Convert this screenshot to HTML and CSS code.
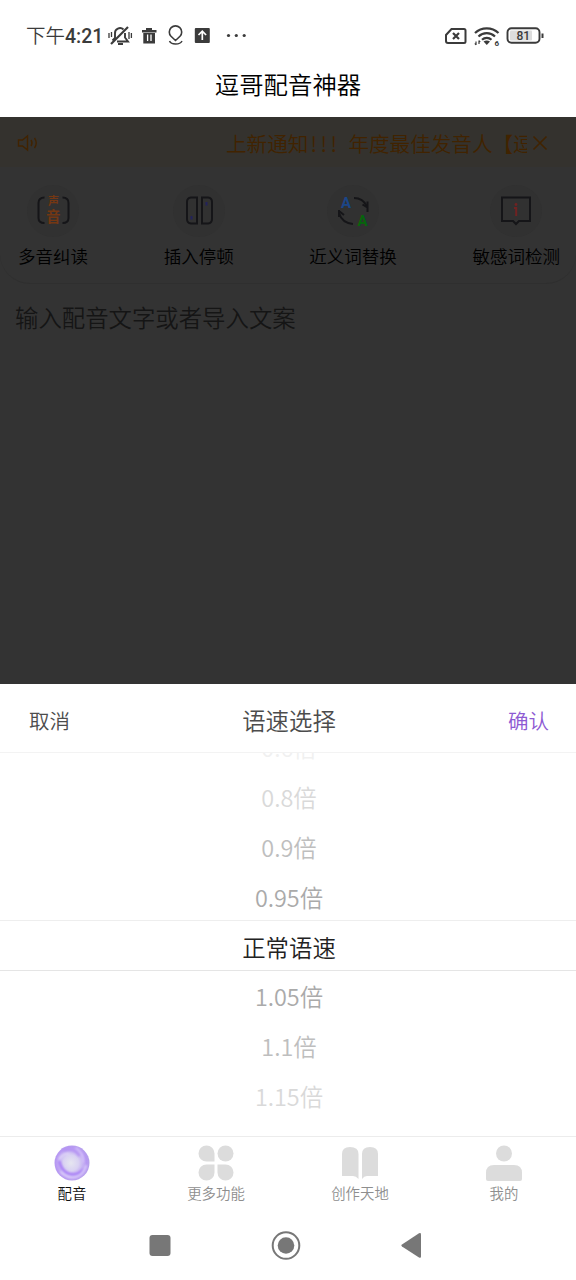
FILE: index.html
```html
<!DOCTYPE html>
<html lang="zh-CN">
<head>
<meta charset="utf-8">
<title>逗哥配音神器</title>
<link rel="stylesheet" href="styles.css">
</head>
<body>
<div class="phone">
  <header class="status">
    <span class="clock">下午<b>4:21</b></span>
    <svg class="status-left" width="146" height="26" viewBox="0 0 146 26" fill="none" stroke="#3b3b3b">
      <g stroke-width="1.900">
        <path d="M4.500 17.500L7 15V10.500A5 5 0 0 1 15.500 6.500M17 10V14.500L20 18.500H9"/>
        <path d="M3 21L20 4" stroke-width="2.200"/>
        <path d="M10 21H15" stroke-width="2"/>
        <path d="M1 10V15M3.500 9V14M21 9V16M23.400 10V15" stroke-width="1.300"/>
      </g>
      <path d="M34 7H48.500V9.500H34ZM38 5H44V7H38ZM35.300 10H47V20.500H35.300Z" fill="#3b3b3b" stroke="none"/>
      <path d="M39.600 11.500V18M43 11.500V18" stroke="#fff" stroke-width="1.300"/>
      <path d="M67.500 17.500L63 13.300A6.200 6.200 0 1 1 72 13.300Z" stroke-width="1.600"/>
      <path d="M61.500 18C63 22 72 22 74 18" stroke-width="1.500"/>
      <rect x="86.800" y="5" width="15" height="15" rx="1" fill="#3b3b3b" stroke="none"/>
      <path d="M94.300 17V8.500M90.500 12L94.300 8.200L98.100 12" stroke="#fff" stroke-width="1.700"/>
      <g fill="#3b3b3b" stroke="none"><circle cx="120.500" cy="12.500" r="1.600"/><circle cx="128.300" cy="12.500" r="1.600"/><circle cx="136.200" cy="12.500" r="1.600"/></g>
    </svg>
    <svg class="status-right" width="102" height="26" viewBox="0 0 102 26" fill="none" stroke="#3b3b3b">
      <path d="M7.500 6H20Q21.500 6 21.500 7.500V18.500Q21.500 20 20 20H4Q2 20 2 18V12Z" stroke-width="2"/>
      <path d="M9 10L15 16M15 10L9 16" stroke-width="2.200"/>
      <g stroke-width="2.200"><path d="M31 10A17 17 0 0 1 54.500 10"/><path d="M34.500 13.500A12 12 0 0 1 51 13.500"/><path d="M38 16.800A7 7 0 0 1 47.500 16.800"/></g>
      <path d="M39.500 18.500Q42.800 16.500 46 18.500L42.800 22Z" fill="#3b3b3b" stroke="none"/>
      <path d="M32 18.500V22M35 17.500V21M30.800 20.500L32 22M35 17.500L36.200 19" stroke-width="1.200"/>
      <text x="50.500" y="22.500" class="wifi-gen">6</text>
      <rect x="63.500" y="5.200" width="32" height="14.600" rx="4" stroke-width="1.900"/>
      <rect x="66" y="7.500" width="22" height="10" rx="1" fill="#ddd" stroke="none"/>
      <path d="M98.500 10.500V15" stroke-width="2"/>
      <text x="72.500" y="17" class="battery-level">81</text>
    </svg>
  </header>
  <h1 class="app-title">逗哥配音神器</h1>

  <main class="editor">
    <div class="notice">
      <svg width="24" height="20" viewBox="0 0 24 20" fill="none" stroke="#412300" stroke-width="1.400"><path d="M2.500 7H6.500L11.500 3V17L6.500 13H2.500ZM15 7Q17 10 15 13M18.500 5Q22 10 18.500 15"/></svg>
      <div class="notice-text">上新通知<span class="bang">!!!</span>年度最佳发音人【逗</div>
      <svg width="18" height="18" viewBox="0 0 18 18" stroke="#412300" stroke-width="1.600"><path d="M2.500 2.500L15.500 15.500M15.500 2.500L2.500 15.500"/></svg>
    </div>
    <section class="tools">
      <div class="tool">
        <svg width="52" height="52" viewBox="0 0 52 52" fill="none" stroke="#151518" stroke-width="2"><circle class="halo" cx="26" cy="26" r="26"/><path d="M17.500 12.500Q11.500 12.500 11.500 18V33Q11.500 38 17.500 38M35.500 12.500Q41.500 12.500 41.500 18V33Q41.500 38 35.500 38"/><text class="sound-top" x="21" y="20">声</text><text class="sound-bottom" x="19" y="37">音</text></svg>
        <span>多音纠读</span>
      </div>
      <div class="tool">
        <svg width="52" height="52" viewBox="0 0 52 52" fill="none" stroke="#151518" stroke-width="2"><circle class="halo" cx="26" cy="26" r="26"/><path d="M24 12.500H18Q14 13 14 17V34Q14 38 18 38.500H24ZM29 12.500H35Q39 13 39 17V34Q39 38 35 38.500H29Z"/><path d="M18.500 31V34.500M33.500 17V20.500" stroke="#22225c"/></svg>
        <span>插入停顿</span>
      </div>
      <div class="tool">
        <svg width="52" height="52" viewBox="0 0 52 52" fill="none" stroke="#151518" stroke-width="2"><circle class="halo" cx="26" cy="26" r="26"/><path d="M27 13Q36 13 40 21.500M12 28Q15 38 26 39"/><path d="M35.500 19.500L40.500 22.500V16.500M12 26L17 30M40.500 21V27M12 32V25"/><text class="letter blue" x="14" y="22.500">A</text><text class="letter green" x="30.500" y="40.500">A</text></svg>
        <span>近义词替换</span>
      </div>
      <div class="tool">
        <svg width="52" height="52" viewBox="0 0 52 52" fill="none" stroke="#151518" stroke-width="2"><circle class="halo" cx="26" cy="26" r="26"/><path d="M12 12.500H40V36H29L26 39L23 36H12Z"/><path d="M24 23H26.200V31" stroke="#702222"/><circle cx="26" cy="19.500" r="1.400" fill="#702222" stroke="none"/></svg>
        <span>敏感词检测</span>
      </div>
    </section>
    <p class="placeholder">输入配音文字或者导入文案</p>
  </main>

  <section class="sheet">
    <div class="sheet-head"><span class="cancel">取消</span><span class="sheet-title">语速选择</span><span class="confirm">确认</span></div>
    <div class="wheel">
      <div class="row far3">0.6倍</div>
      <div class="row far2">0.8倍</div>
      <div class="row far1">0.9倍</div>
      <div class="row near">0.95倍</div>
      <div class="row selected">正常语速</div>
      <div class="row near">1.05倍</div>
      <div class="row far1">1.1倍</div>
      <div class="row far2">1.15倍</div>
    </div>
  </section>

  <nav class="tabs">
    <div class="tab active">
      <svg width="36" height="36" viewBox="0 0 36 36">
        <defs>
          <radialGradient id="orb" cx=".47" cy=".5" r=".55"><stop offset="0" stop-color="#e6e6f0"/><stop offset=".4" stop-color="#d9d2f2"/><stop offset=".8" stop-color="#b798f3"/><stop offset="1" stop-color="#b3a0e8"/></radialGradient>
          <filter id="soft"><feGaussianBlur stdDeviation="1"/></filter>
        </defs>
        <circle cx="18" cy="18" r="17.500" fill="url(#orb)"/>
        <g fill="none" stroke-linecap="round" filter="url(#soft)">
          <path d="M5 15Q7 26 15 29Q24 31 30 24" stroke="#a77bf7" stroke-width="2.500"/>
          <path d="M10 5Q20 2 25 10" stroke="#b594f3" stroke-width="3"/>
          <path d="M5 15Q8 8 15 9" stroke="#e3daf8" stroke-width="1.600"/>
          <path d="M7 27Q14 34 22 32Q29 30 32 21" stroke="#dfd3fa" stroke-width="2"/>
          <path d="M22 3Q30 8 29 17" stroke="#d7c5fb" stroke-width="1.600"/>
        </g>
      </svg>
      <span>配音</span>
    </div>
    <div class="tab">
      <svg width="36" height="36" viewBox="0 0 36 36" fill="#dcdcdc"><path d="M8.500 .5A8 8 0 0 1 16.500 8.500V16.500H8.500A8 8 0 0 1 8.500 .5ZM8.500 19.500H16.500V27.500A8 8 0 1 1 8.500 19.500ZM19.500 19.500H27.500A8 8 0 1 1 19.500 27.500Z"/><circle cx="27.500" cy="8.500" r="8"/></svg>
      <span>更多功能</span>
    </div>
    <div class="tab">
      <svg width="36" height="36" viewBox="0 0 36 36" fill="#dcdcdc"><path d="M0 9Q0 2 8 2Q16.500 2 16.500 9V34Q14 31 11 31H0ZM20 9Q20 2 28 2Q36 2 36 9V31H25Q22 31 20 34Z"/></svg>
      <span>创作天地</span>
    </div>
    <div class="tab">
      <svg width="36" height="36" viewBox="0 0 36 36" fill="#dcdcdc"><circle cx="18" cy="8.500" r="8"/><path d="M0 28Q0 20 8 20H28Q36 20 36 28V34Q36 36 34 36H2Q0 36 0 34Z"/></svg>
      <span>我的</span>
    </div>
  </nav>
  <footer class="sysnav">
    <svg width="576" height="70" viewBox="0 0 576 70" fill="#777"><rect x="149.500" y="25" width="21" height="21" rx="3"/><circle cx="286" cy="35.500" r="13.300" fill="none" stroke="#777" stroke-width="2"/><circle cx="286" cy="35.500" r="8.300"/><path d="M402 34.500L419 23.300Q421 22.500 421 24.500V46.500Q421 48.500 419 47.500L402 36.500Q400.500 35.500 402 34.500Z"/></svg>
  </footer>
</div>
</body>
</html>
```

FILE: styles.css
```css
* { box-sizing: border-box; margin: 0; padding: 0; }
body {
  width: 576px;
  height: 1280px;
  overflow: hidden;
  background: #fff;
  font-family: "Noto Sans CJK SC", sans-serif;
  font-weight: 350;
}
svg { display: block; flex: none; }
.phone { display: flex; flex-direction: column; height: 1280px; }

.status { display: flex; align-items: center; height: 50px; padding: 22px 0 0 26px; color: #3b3b3b; }
.clock { width: 82px; font-size: 19.500px; line-height: 26px; white-space: nowrap; }
.clock b { font-family: Roboto, sans-serif; font-weight: 500; font-size: 19.500px; letter-spacing: 0; }
.status-right { margin-left: auto; margin-right: 30px; }
.wifi-gen { font: 700 8px Roboto, sans-serif; fill: #3b3b3b; stroke: none; }
.battery-level { font: 500 12px Roboto, sans-serif; fill: #3b3b3b; stroke: none; }

.app-title { height: 67px; font-size: 24.400px; font-weight: 350; line-height: 67px; text-align: center; color: #000; }

.editor { height: 567px; background: #333; }
.notice { display: flex; align-items: center; height: 50px; padding: 2px 0 0 16px; background: #34322e; }
.notice-text { width: 301px; margin: 0 4px 0 186px; overflow: hidden; font-size: 20.600px; line-height: 30px; white-space: nowrap; color: #412300; }
.bang { display: inline-block; width: 40px; padding-left: 2px; letter-spacing: 3.600px; }
.tools {
  display: flex;
  justify-content: space-between;
  height: 117px;
  padding: 18px 16px 0 18px;
  border-bottom: 1px solid #2f2f2f;
  border-radius: 0 0 30px 30px;
}
.tool { display: flex; flex-direction: column; align-items: center; font-size: 17.500px; line-height: 26px; color: #000; }
.tool span { margin-top: 6px; }
.halo { fill: #313131; stroke: none; }
.sound-top { font-size: 11px; font-weight: 700; fill: #743713; stroke: none; }
.sound-bottom { font-size: 14.500px; font-weight: 700; fill: #743713; stroke: none; }
.letter { font: 700 15px Roboto, sans-serif; stroke: none; }
.blue { fill: #1b4688; }
.green { fill: #06650c; }
.placeholder { padding: 16px 15px; font-size: 23.400px; line-height: 34px; color: #151515; }

.sheet { height: 452px; }
.sheet-head { display: flex; align-items: center; justify-content: space-between; height: 69px; padding: 3px 27px 0 29px; border-bottom: 1px solid #f3f3f3; font-size: 20.500px; color: #4c4c4c; }
.sheet-title { font-size: 23.400px; line-height: 34px; }
.confirm { color: #8d5ad3; }
.wheel { height: 383px; overflow: hidden; }
.row { height: 49.850px; font-size: 23.400px; line-height: 53.400px; text-align: center; padding-left: 2px; color: #222; }
.row:first-child { margin-top: -32px; }
.near { color: #aaa; }
.far1 { color: #bebebe; }
.far2 { color: #d9d9d9; }
.far3 { color: #f0f0f0; }
.selected { height: 50.600px; margin-bottom: -.750px; border-top: 1px solid #eee; border-bottom: 1px solid #e5e5e5; line-height: 52px; }

.tabs { display: grid; grid-template-columns: repeat(4, 1fr); height: 74px; padding-top: 8px; border-top: 1px solid #ececec; }
.tab { display: flex; flex-direction: column; align-items: center; font-size: 14.400px; line-height: 20px; color: #8e8e8e; }
.tab span { margin-top: 2px; }
.tab.active { color: #111; }
.sysnav { height: 70px; }
```
